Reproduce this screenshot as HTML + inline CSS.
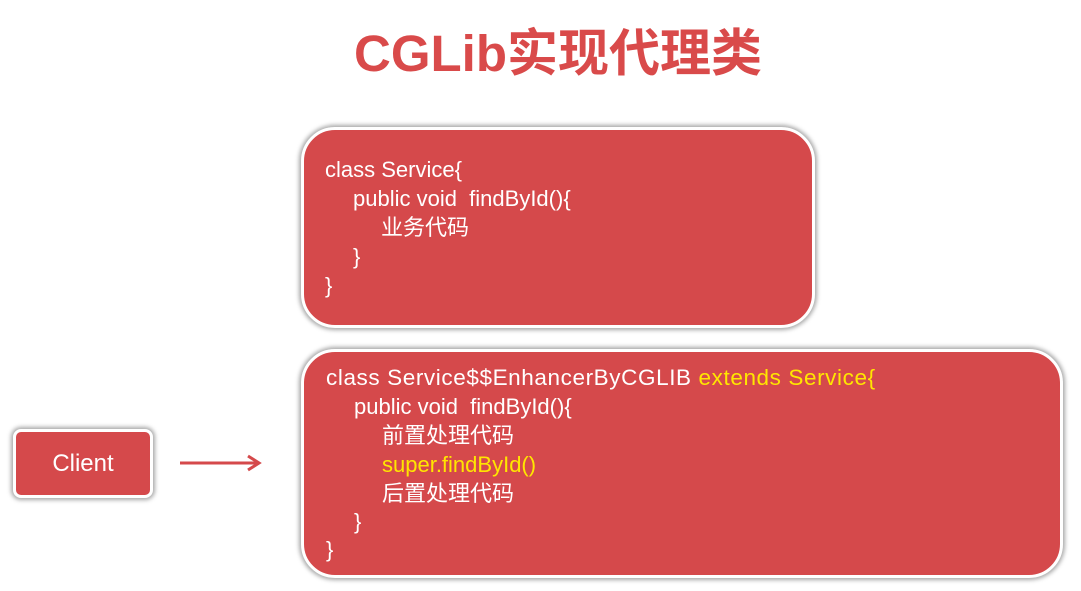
<!DOCTYPE html>
<html><head><meta charset="utf-8"><style>
body{margin:0;width:1081px;height:591px;background:#fff;position:relative;overflow:hidden;font-family:"Liberation Sans","Noto Sans CJK SC",sans-serif}
.t{position:absolute;left:0;width:1116px;text-align:center;top:12px;font-size:51px;font-weight:bold;color:#d94a4a}
.b{position:absolute;background:#d5494b;border:3px solid #fff;box-shadow:0 0 4px 2px rgba(0,0,0,.35);border-radius:34px;box-sizing:border-box;color:#fff}
.l{position:absolute;font-size:22px;white-space:pre;color:#fff;line-height:26px;height:26px}
.y{color:#ffe600}
</style></head><body>
<div class="t">CGLib实现代理类</div>
<div class="b" style="left:301px;top:127px;width:514px;height:201px"></div>
<div class="l" style="left:325px;top:157px">class Service{</div>
<div class="l" style="left:353px;top:186px">public void  findById(){</div>
<div class="l" style="left:381px;top:215px">业务代码</div>
<div class="l" style="left:353px;top:244px">}</div>
<div class="l" style="left:325px;top:273px">}</div>
<div class="b" style="left:301px;top:349px;width:762px;height:229px"></div>
<div class="l" style="left:326px;top:365px;font-size:22.5px;letter-spacing:0.6px">class Service$$EnhancerByCGLIB <span class="y">extends Service{</span></div>
<div class="l" style="left:354px;top:394px">public void  findById(){</div>
<div class="l" style="left:382px;top:423px">前置处理代码</div>
<div class="l y" style="left:382px;top:452px">super.findById()</div>
<div class="l" style="left:382px;top:481px">后置处理代码</div>
<div class="l" style="left:354px;top:509px">}</div>
<div class="l" style="left:326px;top:537px">}</div>
<div class="b" style="left:13px;top:429px;width:140px;height:69px;border-radius:8px;font-size:24px;text-align:center;line-height:63px">Client</div>
<svg style="position:absolute;left:178px;top:452px" width="86" height="22"><path d="M2 11H80M70 4L81 11L70 18" stroke="#d5494b" stroke-width="3" fill="none"/></svg>
</body></html>
